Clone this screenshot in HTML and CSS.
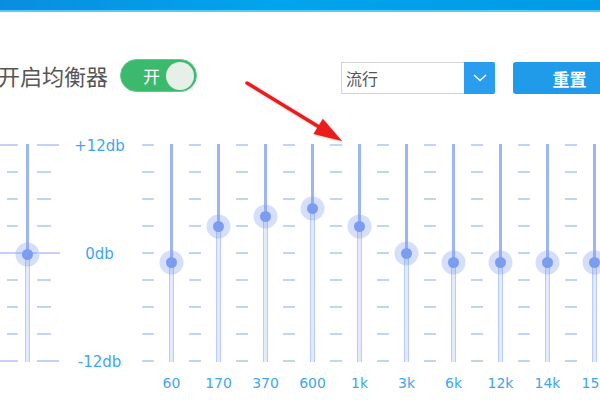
FILE: index.html
```html
<!DOCTYPE html>
<html lang="zh-CN">
<head>
  <meta charset="UTF-8">
  <meta name="viewport" content="width=device-width, initial-scale=1.0">
  <title>均衡器</title>
  <link rel="stylesheet" href="styles.css">
</head>
<body>
  <!-- window title bar strip -->
  <div class="topbar"></div>

  <!-- switch, preset and reset -->
  <div class="toolbar">
    <span class="toolbar-label">开启均衡器</span>
    <div class="switch">
      <span class="switch-text">开</span>
      <span class="switch-knob"></span>
    </div>
    <div class="preset">
      <span class="preset-value">流行</span>
      <span class="preset-arrow">
        <svg width="14" height="8" viewBox="0 0 14 8"><path d="M1 1l6 5.5L13 1" fill="none" stroke="#fff" stroke-width="1.4"/></svg>
      </span>
    </div>
    <button class="reset" type="button">重置</button>
  </div>

  <!-- equalizer bands -->
  <div class="eq">
    <div class="band band--pre">
      <div class="slider" style="--y:110px">
        <span class="pre-line pre-line--top"></span>
        <span class="pre-line pre-line--zero"></span>
        <span class="pre-line pre-line--bottom"></span>
        <span class="track-up"></span>
        <span class="track-down"></span>
        <span class="knob"></span>
      </div>
    </div>

    <div class="scale">
      <span>+12db</span>
      <span>0db</span>
      <span>-12db</span>
    </div>

    <div class="band">
      <div class="slider" style="--y:118px"><span class="track-up"></span><span class="track-down"></span><span class="knob"></span></div>
      <span class="freq">60</span>
    </div>
    <div class="band">
      <div class="slider" style="--y:82px"><span class="track-up"></span><span class="track-down"></span><span class="knob"></span></div>
      <span class="freq">170</span>
    </div>
    <div class="band">
      <div class="slider" style="--y:72px"><span class="track-up"></span><span class="track-down"></span><span class="knob"></span></div>
      <span class="freq">370</span>
    </div>
    <div class="band">
      <div class="slider" style="--y:64px"><span class="track-up"></span><span class="track-down"></span><span class="knob"></span></div>
      <span class="freq">600</span>
    </div>
    <div class="band">
      <div class="slider" style="--y:82px"><span class="track-up"></span><span class="track-down"></span><span class="knob"></span></div>
      <span class="freq">1k</span>
    </div>
    <div class="band">
      <div class="slider" style="--y:109px"><span class="track-up"></span><span class="track-down"></span><span class="knob"></span></div>
      <span class="freq">3k</span>
    </div>
    <div class="band">
      <div class="slider" style="--y:118px"><span class="track-up"></span><span class="track-down"></span><span class="knob"></span></div>
      <span class="freq">6k</span>
    </div>
    <div class="band">
      <div class="slider" style="--y:118px"><span class="track-up"></span><span class="track-down"></span><span class="knob"></span></div>
      <span class="freq">12k</span>
    </div>
    <div class="band">
      <div class="slider" style="--y:118px"><span class="track-up"></span><span class="track-down"></span><span class="knob"></span></div>
      <span class="freq">14k</span>
    </div>
    <div class="band">
      <div class="slider" style="--y:118px"><span class="track-up"></span><span class="track-down"></span><span class="knob"></span></div>
      <span class="freq">15k</span>
    </div>
  </div>

  <!-- red pointer drawn over the page -->
  <svg class="pointer" width="600" height="400" viewBox="0 0 600 400">
    <line x1="247" y1="83" x2="320" y2="127.5" stroke="#ec1c1c" stroke-width="3.5" stroke-linecap="round"/>
    <polygon points="342,141 313.4,134.1 322.8,118.7" fill="#ec1c1c"/>
  </svg>
</body>
</html>
```

FILE: styles.css
```css
html, body {
  margin: 0;
  padding: 0;
  height: 100%;
  overflow: hidden;
}
body {
  position: relative;
  background: #fff;
  font-family: "DejaVu Sans", "Noto Sans CJK SC", sans-serif;
}

/* Blue strip at the very top */
.topbar {
  height: 10px;
  background: linear-gradient(to right, #0a8de0, #00a5ec 45%, #009be6);
  border-bottom: 2px solid #5cc8f6;
}

/* Toolbar row */
.toolbar {
  display: flex;
  align-items: flex-start;
  width: 628px;
  margin: 47px 0 0 -2px;
}
.toolbar-label {
  font-family: "Noto Sans CJK SC", sans-serif;
  font-size: 22px;
  line-height: 33px;
  color: #555;
}
.switch {
  display: flex;
  align-items: center;
  box-sizing: border-box;
  width: 77px;
  height: 33px;
  margin-left: 12px;
  padding: 0 2px 0 22px;
  border-radius: 17px;
  background: #3bb96c;
  border: 1px solid #62c98c;
}
.switch-text {
  font-family: "Noto Sans CJK SC", sans-serif;
  font-size: 17px;
  color: #fff;
}
.switch-knob {
  width: 28px;
  height: 28px;
  margin-left: auto;
  border-radius: 50%;
  background: #e6efe8;
}
.preset {
  display: flex;
  box-sizing: border-box;
  width: 154px;
  height: 32px;
  margin: 3px 0 0 auto;
  border: 1px solid #d4d4d4;
  border-right: none;
  background: #fff;
}
.preset-value {
  flex: 1;
  padding-left: 4px;
  font-family: "Noto Sans CJK SC", sans-serif;
  font-size: 16px;
  line-height: 30px;
  color: #555;
}
.preset-arrow {
  display: flex;
  align-items: center;
  justify-content: center;
  width: 31px;
  margin: -1px 0;
  background: #2a9dee;
  border-radius: 0 2px 2px 0;
}
.reset {
  width: 113px;
  height: 32px;
  margin: 3px 0 0 18px;
  padding: 0;
  border: none;
  border-radius: 3px;
  background: #1f9be9;
  color: #fff;
  font-family: "Noto Sans CJK SC", sans-serif;
  font-size: 17px;
  font-weight: bold;
}

/* Equalizer */
.eq {
  display: flex;
  width: 620px;
  margin-top: 50px;
  padding-left: 4px;
}
.band {
  display: flex;
  flex-direction: column;
  align-items: center;
  width: 47px;
  flex-shrink: 0;
}
.slider {
  position: relative;
  width: 47px;
  height: 218px;
}
/* one 12px dash centred on each band's left edge, every 27px */
.band .slider::before {
  content: "";
  position: absolute;
  left: -6px;
  top: 0;
  width: 12px;
  height: 218px;
  background: repeating-linear-gradient(to bottom, #c4d2f7 0 2px, transparent 2px 27px);
}
.band--pre .slider::before {
  left: 3px;
  width: 11px;
}
.band--pre .slider::after {
  content: "";
  position: absolute;
  left: 33px;
  top: 0;
  width: 14px;
  height: 218px;
  background: repeating-linear-gradient(to bottom, #c4d2f7 0 2px, transparent 2px 27px);
}
.pre-line {
  position: absolute;
  left: -4px;
  height: 2px;
  background: #c4d2f7;
}
.pre-line--top { top: 0; width: 59px; }
.pre-line--bottom { bottom: 0; width: 59px; }
.pre-line--zero { top: 108px; width: 60px; }
.pre-line--top,
.pre-line--bottom {
  background: linear-gradient(to right, #c4d2f7 0 18px, transparent 18px 37px, #c4d2f7 37px);
}

.track-up {
  position: absolute;
  left: 22px;
  top: 0;
  width: 3px;
  height: var(--y);
  background: #9cb5f6;
}
.track-down {
  position: absolute;
  left: 21px;
  top: var(--y);
  bottom: 0;
  width: 5px;
  background: linear-gradient(to right, #b9cbf8 0 1px, #e3eafd 1px 4px, #b9cbf8 4px);
}
.knob {
  position: absolute;
  left: 18px;
  top: calc(var(--y) - 5px);
  width: 11px;
  height: 11px;
  border-radius: 50%;
  background: #7b9cf1;
  box-shadow: 0 0 0 6.5px rgba(124, 157, 241, 0.32);
}

.scale {
  display: flex;
  flex-direction: column;
  justify-content: space-between;
  align-items: center;
  width: 97px;
  height: 234px;
  margin-top: -7px;
  flex-shrink: 0;
  font-size: 15px;
  line-height: 18px;
  color: #3da6f2;
}
.freq {
  margin-top: 13px;
  font-size: 14px;
  line-height: 16px;
  color: #3da6f2;
}

/* Annotation arrow */
.pointer {
  position: absolute;
  left: 0;
  top: 0;
  pointer-events: none;
  filter: drop-shadow(1px 1px 1px rgba(0, 0, 0, 0.25));
}
```
